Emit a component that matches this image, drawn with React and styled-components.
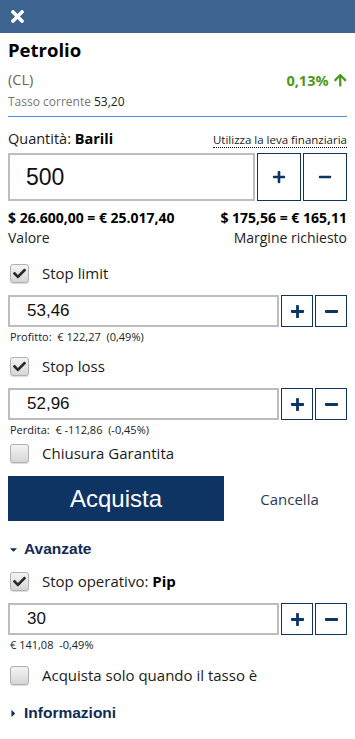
import React from 'react'
import styled, { createGlobalStyle } from 'styled-components';
import { FaTimes, FaArrowUp, FaCheck, FaPlus, FaMinus, FaCaretDown, FaCaretRight } from 'react-icons/fa';

const Global = createGlobalStyle`
    body {
        margin:0;
        background:#fff;
        font-family:"Open Sans", "Noto Sans", sans-serif;
        color:#1a1a1a;
    }
`

const Header = styled.div`
    height:33px;
    background:#3d6490;
    display:flex;
    align-items:center;
    padding-left:8px;
    color:#fff;
    font-size:19px;
`

const Page = styled.div`
    padding:0 8px;
`

const Title = styled.h1`
    margin:5px 0 0;
    font-size:18.5px;
    font-weight:700;
    line-height:24px;
    color:#000;
`

const Row = styled.div`
    display:flex;
    justify-content:space-between;
    align-items:${({ align }) => align || 'center'};
`

const TopRow = styled(Row)`
    margin-top:5px;
`

const Symbol = styled.span`
    font-size:14.5px;
    color:#666;
    line-height:26px;
`

const Change = styled.span`
    font-size:14.5px;
    font-weight:700;
    color:#4b9a1c;
    display:flex;
    align-items:center;
    gap:4px;
`

const Rate = styled.div`
    font-size:12px;
    color:#777;
    line-height:16px;
    margin-top:1px;
    padding-bottom:6px;
    border-bottom:1px solid #4a90e2;

    b {
        font-weight:400;
        color:#222;
        margin-left:3px;
    }
`

const Label = styled.span`
    font-size:14.5px;
    color:#1a1a1a;

    b { font-weight:700; color:#000; }
`

const Leva = styled.span`
    font-size:11.5px;
    color:#222;
    border-bottom:1px dotted #000;
    line-height:15px;
`

const QtyHead = styled(Row)`
    margin-top:9px;
    height:22px;
`

const Stepper = styled.div`
    display:flex;
    gap:2px;
    margin-top:${({ top }) => top || 0}px;
`

const Field = styled.div`
    flex:1;
    height:${({ big }) => big ? 48 : 32}px;
    box-sizing:border-box;
    border:2px solid #bdbdbd;
    display:flex;
    align-items:center;
    padding-left:${({ big }) => big ? 16 : 17}px;
    font-family:"Liberation Sans", Arial, sans-serif;
    font-size:${({ big }) => big ? 23 : 17}px;
    color:#111;
`

const StepButton = styled.button`
    width:${({ big }) => big ? 44 : 32}px;
    height:${({ big }) => big ? 48 : 32}px;
    box-sizing:border-box;
    border:1px solid #0e3464;
    background:#fff;
    color:#0e3464;
    display:flex;
    align-items:center;
    justify-content:center;
    padding:0;
    font-size:${({ big }) => big ? 14 : 15}px;
`

const Amounts = styled(Row)`
    margin-top:7px;
    font-size:14px;
    font-weight:700;
    color:#000;
    line-height:20px;
`

const Captions = styled(Row)`
    font-size:14px;
    color:#222;
    line-height:19px;
`

const CheckRow = styled.label`
    display:flex;
    align-items:center;
    gap:13px;
    margin-top:${({ top }) => top}px;
    padding-left:2px;
    font-size:15px;
    color:#1a1a1a;
    height:22px;

    b { font-weight:700; color:#000; }
`

const Box = styled.span`
    width:19px;
    height:19px;
    box-sizing:border-box;
    border:1px solid #b0b0b0;
    border-radius:3px;
    background:linear-gradient(#f4f4f4, #d6d6d6);
    box-shadow:0 1px 1px rgba(0,0,0,0.15);
    display:flex;
    align-items:center;
    justify-content:center;
    color:#2a2a2a;
    font-size:13px;
`

const Note = styled.div`
    font-size:11px;
    color:#222;
    line-height:14px;
    margin-top:3px;
    padding-left:2px;
    white-space:pre;
`

const Actions = styled.div`
    display:flex;
    align-items:center;
    margin-top:12px;
`

const BuyButton = styled.button`
    width:216px;
    height:45px;
    border:none;
    background:#0e3464;
    color:#fff;
    font-family:"Liberation Sans", Arial, sans-serif;
    font-size:24px;
`

const CancelLink = styled.span`
    flex:1;
    text-align:center;
    padding-left:8px;
    font-size:15px;
    color:#2a3a55;
`

const Section = styled.div`
    display:flex;
    align-items:center;
    gap:5px;
    margin-top:${({ top }) => top}px;
    font-family:"Liberation Sans", Arial, sans-serif;
    font-weight:700;
    font-size:15.5px;
    color:#102a56;
    height:20px;

    svg { font-size:11px; }
`

function Check({ checked, top, children }) {
    return (
        <CheckRow top={top}>
            <Box>{checked && <FaCheck />}</Box>
            <span>{children}</span>
        </CheckRow>
    )
}

function NumberInput({ value, big, top }) {
    return (
        <Stepper top={top}>
            <Field big={big}>{value}</Field>
            <StepButton big={big}><FaPlus /></StepButton>
            <StepButton big={big}><FaMinus /></StepButton>
        </Stepper>
    )
}

export default function App() {
    return (
        <>
            <Global />
            <Header><FaTimes /></Header>
            <Page>
                <Title>Petrolio</Title>
                <TopRow>
                    <Symbol>(CL)</Symbol>
                    <Change>0,13% <FaArrowUp /></Change>
                </TopRow>
                <Rate>Tasso corrente<b>53,20</b></Rate>

                <QtyHead align="flex-end">
                    <Label>Quantità: <b>Barili</b></Label>
                    <Leva>Utilizza la leva finanziaria</Leva>
                </QtyHead>
                <NumberInput value="500" big top={5} />
                <Amounts>
                    <span>$ 26.600,00 = € 25.017,40</span>
                    <span>$ 175,56 = € 165,11</span>
                </Amounts>
                <Captions>
                    <span>Valore</span>
                    <span>Margine richiesto</span>
                </Captions>

                <Check checked top={15}>Stop limit</Check>
                <NumberInput value="53,46" top={11} />
                <Note>Profitto:  € 122,27  (0,49%)</Note>

                <Check checked top={11}>Stop loss</Check>
                <NumberInput value="52,96" top={11} />
                <Note>Perdita:  € -112,86  (-0,45%)</Note>

                <Check top={5}>Chiusura Garantita</Check>
                <Actions>
                    <BuyButton>Acquista</BuyButton>
                    <CancelLink>Cancella</CancelLink>
                </Actions>

                <Section top={18}><FaCaretDown />Avanzate</Section>
                <Check checked top={11}>Stop operativo: <b>Pip</b></Check>
                <NumberInput value="30" top={11} />
                <Note>€ 141,08  -0,49%</Note>
                <Check top={12}>Acquista solo quando il tasso è</Check>
                <Section top={17}><FaCaretRight />Informazioni</Section>
            </Page>
        </>
    );
}
